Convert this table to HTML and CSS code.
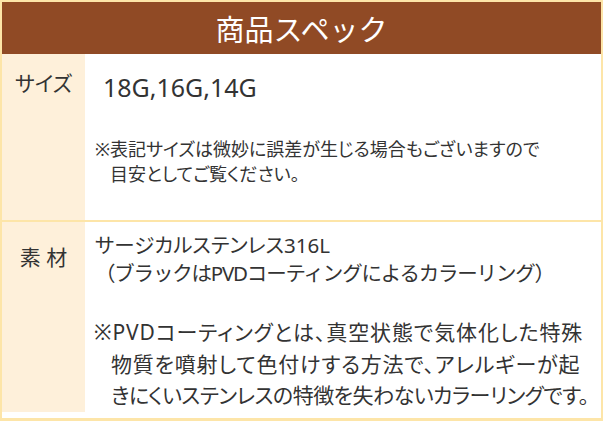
FILE: index.html
```html
<!DOCTYPE html>
<html lang="ja">
<head>
  <meta charset="UTF-8">
  <meta name="viewport" content="width=device-width, initial-scale=1.0">
  <title>商品スペック</title>
  <link rel="stylesheet" href="styles.css">
</head>
<body>
  <div class="spec">
    <h2 class="spec-title">商品スペック</h2>
    <table class="spec-table">
      <tr class="row-size">
        <th>サイズ</th>
        <td>
          <p class="sizes">18G,16G,14G</p>
          <p class="note-small">※表記サイズは微妙に誤差が生じる場合もございますので<br>目安としてご覧ください。</p>
        </td>
      </tr>
      <tr class="row-material">
        <th>素 材</th>
        <td>
          <p class="material">
            <span class="line">サージカルステンレス316L</span>
            <span class="line paren">（ブラックはPVDコーティングによるカラーリング）</span>
          </p>
          <p class="note-large">
            <span class="line line-1">※PVDコーティングとは、真空状態で気体化した特殊</span>
            <span class="line line-2">物質を噴射して色付けする方法で、アレルギーが起</span>
            <span class="line line-3">きにくいステンレスの特徴を失わないカラーリングです。</span>
          </p>
        </td>
      </tr>
    </table>
  </div>
</body>
</html>
```

FILE: styles.css
```css
* {
  padding: 0;
  margin: 0;
  box-sizing: border-box;
}

body {
  font-family: "Noto Sans", "Noto Sans CJK JP", sans-serif;
  background-color: #fff;
  color: #333;
}

.spec {
  width: 603px;
  height: 421px;
  border: 2px solid #fde5a8;
  border-bottom-width: 3px;
}

.spec-title {
  height: 52px;
  background-color: #904a25;
  color: #fff;
  font-family: "Noto Sans CJK JP", sans-serif;
  font-size: 29px;
  font-weight: 400;
  line-height: 52px;
  text-align: center;
}

.spec-table {
  width: 100%;
  border-collapse: collapse;
}

.spec-table th {
  width: 83px;
  background-color: #fef0da;
  font-size: 21px;
  font-weight: 400;
  text-align: center;
  vertical-align: top;
  font-feature-settings: "palt";
}

.spec-table td {
  padding-left: 10px;
  vertical-align: top;
  font-feature-settings: "palt";
  white-space: nowrap;
}

.row-size {
  height: 167px;
  border-bottom: 2px solid #fde5a8;
}

.row-size th {
  padding-top: 13px;
}

.row-material th {
  padding-top: 19px;
}

.line {
  display: block;
}

.sizes {
  margin: 19px 0 0 8px;
  font-size: 25px;
  line-height: 28px;
}

.note-small {
  margin-top: 36px;
  font-size: 18px;
  line-height: 25px;
  padding-left: 15px;
  text-indent: -15px;
}

.material {
  margin-top: 9px;
  font-size: 20.5px;
  line-height: 28px;
}

.material .paren {
  font-feature-settings: normal;
  letter-spacing: -1.2px;
}

.note-large {
  margin-top: 30px;
  font-size: 21px;
  line-height: 31.5px;
  padding-left: 16px;
}

.note-large .line-1 {
  margin-left: -17px;
  letter-spacing: 0.9px;
}

.note-large .line-2 {
  letter-spacing: 0.8px;
}

.note-large .line-3 {
  letter-spacing: -0.5px;
}
```
